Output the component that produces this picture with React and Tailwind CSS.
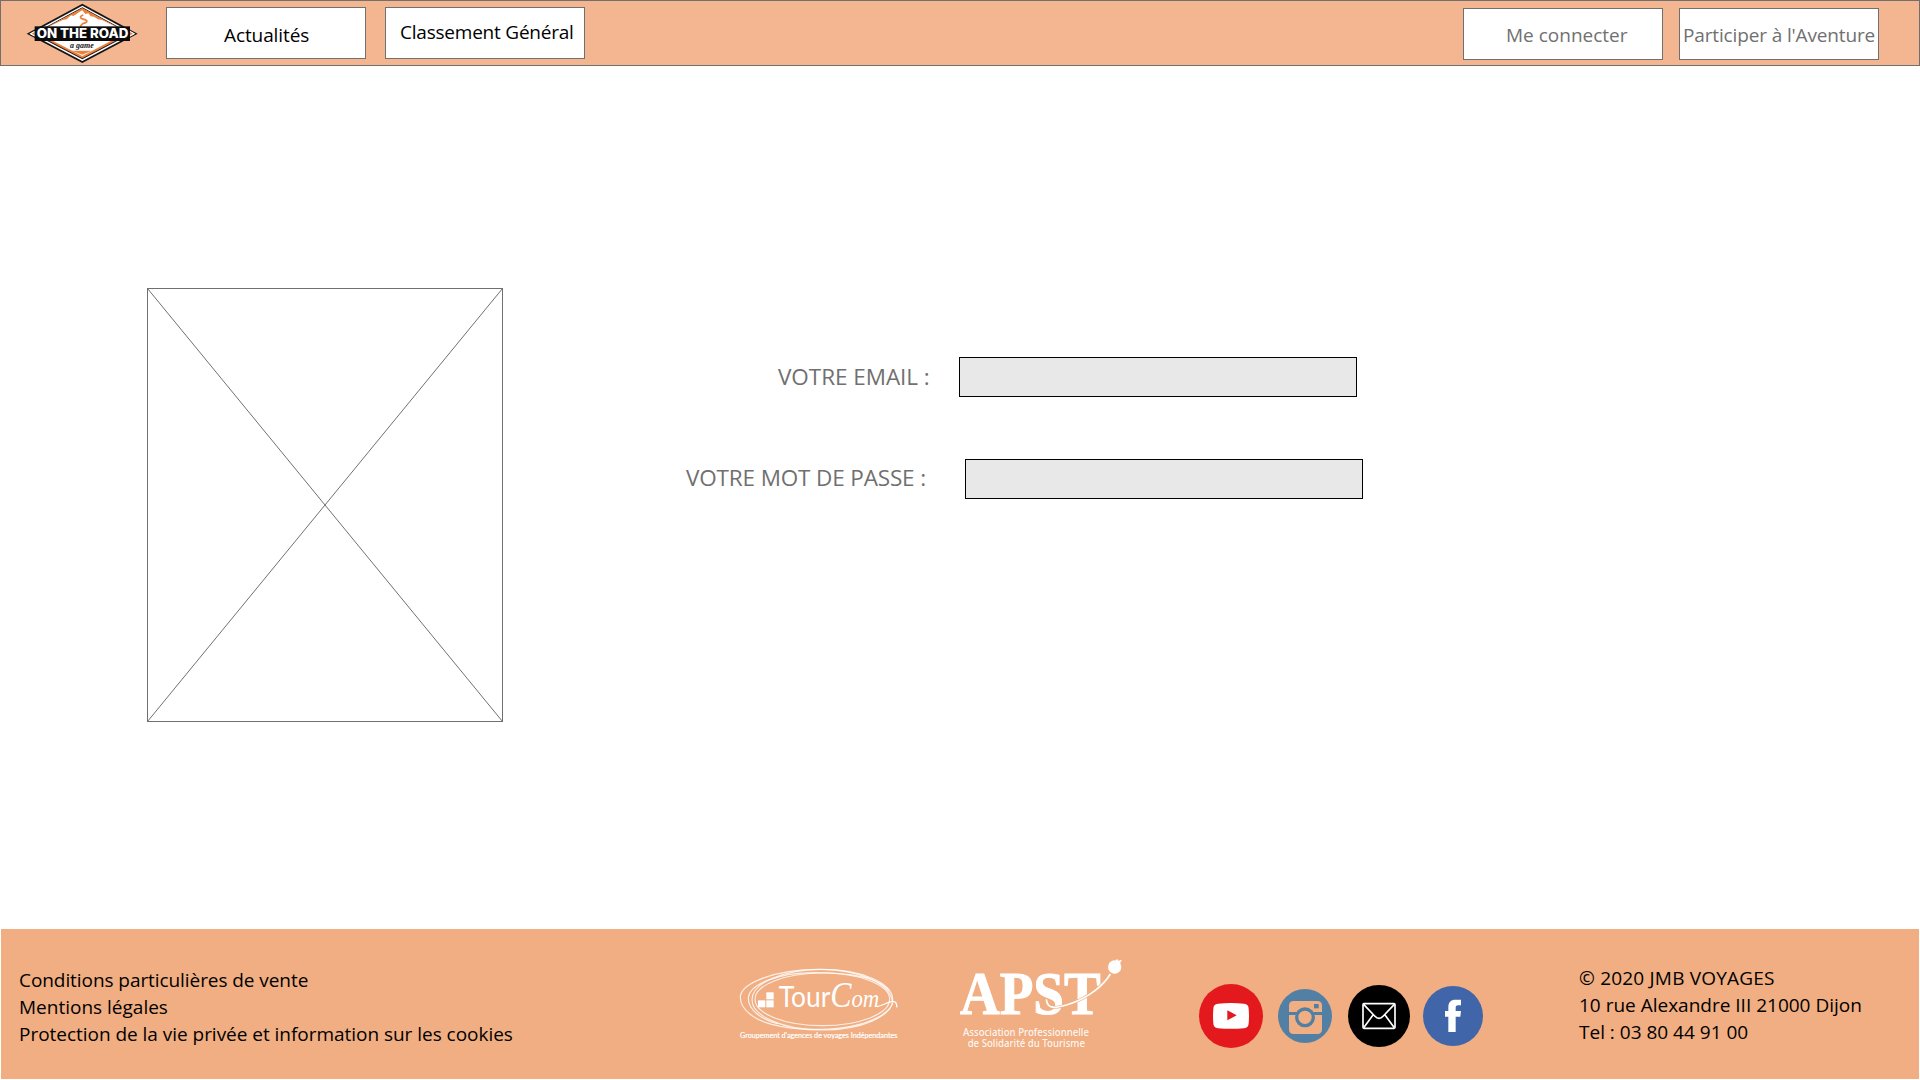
function RoadLogo() {
  return (
    <svg className="h-[60px] w-[112px] shrink-0" viewBox="18 9 336 180">
      <polygon points="187,11 353,101 187,189 20,101" fill="#151515" />
      <polygon points="187,17 342,101 187,183 31,101" fill="#ffffff" />
      <polygon points="187,22 333,101 187,178 40,101" fill="#151515" />
      <polygon points="187,25 327,101 187,175 46,101" fill="#ec7f3b" />
      <path d="M81 82 L132 55 L160 41 L166 44 L176 35 L187 30 L196 40 L204 37 L212 44 L218 42 L240 55 L292 82 Z" fill="#ffffff" />
      <path d="M187 24 L187 30 L170 41 L160 48 L153 46 L140 58 L128 60 L84 81 L70 88 Z" fill="#ec7f3b" />
      <path d="M187 24 L187 30 L196 42 L205 40 L212 49 L222 50 L234 58 L246 60 L290 81 L304 88 Z" fill="#ec7f3b" />
      <path d="M190 45 C178 50 178 54 192 58 C206 62 202 68 188 71 L180 80" fill="none" stroke="#ec7f3b" strokeWidth="5" />
      <polygon points="94,120 278,120 187,168" fill="#ffffff" />
      <polygon points="155,152 215,152 187,164" fill="#ec7f3b" />
      <path d="M28 101 L44 92 V110 Z M346 101 L330 92 V110 Z" fill="#ffffff" />
      <path d="M35 101 L44 96 V106 Z M339 101 L330 96 V106 Z" fill="#ec7f3b" />
      <rect x="44" y="79" width="286" height="44" fill="#0c0c0c" />
      <text x="50" y="115" fill="#ffffff" fontFamily="Inter, sans-serif" fontWeight="800" fontSize="38" textLength="275" lengthAdjust="spacingAndGlyphs">ON THE ROAD</text>
      <text x="150" y="144" fill="#151515" fontFamily="'Liberation Serif', serif" fontStyle="italic" fontWeight="700" fontSize="27" textLength="71" lengthAdjust="spacingAndGlyphs">a game</text>
    </svg>
  );
}

function TourComLogo() {
  return (
    <svg className="mt-[38px] ml-[225px] h-[73px] w-[160px] shrink-0" viewBox="9 21 480 219">
      <g fill="none" stroke="#ffffff" strokeOpacity="0.8" strokeWidth="3.5">
        <ellipse cx="262" cy="119" rx="211" ry="91" />
        <ellipse cx="262" cy="118" rx="202" ry="79" />
        <path d="M472 122 C462 68 370 28 250 28 C120 28 16 70 16 112 C16 150 60 180 110 193 C180 212 300 214 370 194 C430 178 466 152 474 128" />
        <path d="M462 92 C430 52 340 38 240 38 C130 38 42 72 40 115 C40 150 80 180 130 192" />
      </g>
      <g fill="#ffffff">
        <rect x="69" y="121" width="22" height="21" />
        <rect x="94" y="121" width="22" height="21" />
        <rect x="94" y="97" width="22" height="21" />
        <text x="131" y="141" fontFamily="Lato, sans-serif" fontSize="88" textLength="302" lengthAdjust="spacingAndGlyphs">
          Tour<tspan fontFamily="'Liberation Serif', serif" fontStyle="italic" fontSize="106">C</tspan><tspan fontFamily="'Liberation Serif', serif" fontStyle="italic" fontSize="76">om</tspan>
        </text>
        <text x="15" y="234" fontFamily="Lato, sans-serif" fontSize="21" fontWeight="400" stroke="#ffffff" strokeWidth="0.6" textLength="472" lengthAdjust="spacingAndGlyphs">Groupement d'agences de voyages Indépendantes</text>
      </g>
      <path d="M426 140 C442 138 456 126 472 124 C482 123 485 130 486 142" fill="none" stroke="#ffffff" strokeWidth="4" />
    </svg>
  );
}

function ApstLogo() {
  return (
    <svg className="mt-[29px] ml-[61px] h-[92px] w-[164px] shrink-0" viewBox="12 24 492 276">
      <text x="15" y="192" fill="#ffffff" stroke="#ffffff" strokeWidth="3" fontFamily="'Liberation Serif', serif" fontWeight="700" fontSize="182" textLength="422" lengthAdjust="spacingAndGlyphs">APST</text>
      <path d="M274 148 C276 182 310 174 350 160 C400 142 445 108 466 72" fill="none" stroke="#f0ae82" strokeWidth="9" />
      <path d="M274 148 C276 182 310 174 350 160 C400 142 445 108 466 72" fill="none" stroke="#ffffff" strokeWidth="5" />
      <circle cx="479" cy="51" r="20" fill="#ffffff" />
      <path d="M480 36 L486 26 L490 32 L501 29 L494 42 Z" fill="#ffffff" />
      <g fill="#ffffff" fillOpacity="0.9" fontFamily="'Noto Sans', sans-serif" fontSize="30" fontWeight="500">
        <text x="24" y="257" textLength="378" lengthAdjust="spacingAndGlyphs">Association Professionnelle</text>
        <text x="38" y="291" textLength="352" lengthAdjust="spacingAndGlyphs">de Solidarité du Tourisme</text>
      </g>
    </svg>
  );
}

function SocialLinks() {
  return (
    <div className="mt-[55px] ml-[76px] flex h-16 items-center">
      <a href="#" aria-label="YouTube">
        <svg className="h-16 w-16" viewBox="57 72 192 192">
          <circle cx="153" cy="168" r="96" fill="#e3191e" />
          <path d="M114 131 Q153 127 192 131 Q206 132 206 146 Q208 168 206 190 Q206 204 192 205 Q153 208 114 205 Q100 204 100 190 Q98 168 100 146 Q100 132 114 131 Z" fill="#ffffff" />
          <path d="M142 151 L170 166 L142 181 Z" fill="#e3191e" />
        </svg>
      </a>
      <a href="#" aria-label="Instagram" className="ml-[15px]">
        <svg className="h-[54px] w-[54px]" viewBox="294 87 162 162">
          <circle cx="375" cy="168" r="81" fill="#5280a5" />
          <rect x="327" y="123" width="99" height="99" rx="13" fill="#f0ae82" />
          <path d="M327 156 H426 V165 H327 Z" fill="#5280a5" />
          <circle cx="375" cy="172" r="30" fill="#5280a5" />
          <circle cx="375" cy="172" r="20" fill="#f0ae82" />
          <rect x="402" y="132" width="14" height="13" fill="#5280a5" />
        </svg>
      </a>
      <a href="#" aria-label="E-mail" className="ml-4">
        <svg className="h-[62px] w-[62px]" viewBox="504 75 186 186">
          <circle cx="597" cy="168" r="93" fill="#000000" />
          <g fill="none" stroke="#ffffff" strokeWidth="5" strokeLinejoin="round">
            <rect x="549" y="131" width="96" height="74" rx="3" />
            <path d="M551 133 L584 168 Q597 182 610 168 L643 133 M551 203 L579 165 M643 203 L615 165" />
          </g>
        </svg>
      </a>
      <a href="#" aria-label="Facebook" className="ml-[13px]">
        <svg className="h-[60px] w-[60px]" viewBox="729 78 180 180">
          <circle cx="819" cy="168" r="90" fill="#4065a8" />
          <path d="M805 216 V170 H795 V153 H805 V142 C805 127 812 119 827 119 H843 V136 H834 C829 136 827 139 827 143 V153 H843 L841 170 H827 V216 Z" fill="#ffffff" />
        </svg>
      </a>
    </div>
  );
}

const navButton =
  "flex h-[52px] w-[200px] shrink-0 items-start border border-[#707070] bg-white text-[19px] leading-[27px] whitespace-nowrap";
const field = "h-10 w-[398px] border border-black bg-[#e8e8e8] outline-none";
const label = "block text-[22.5px] leading-[30px] whitespace-nowrap text-[#707070]";

export default function App() {
  return (
    <div className="flex h-[1080px] w-[1920px] flex-col overflow-hidden bg-white font-['Open_Sans','Noto_Sans',sans-serif] text-black">
      <header className="flex h-[66px] items-start border border-[#707070] bg-[#f3b691] pt-[6px] pr-10 pl-[25px]">
        <div className="-mt-1">
          <RoadLogo />
        </div>
        <nav className="ml-7 flex gap-[19px]">
          <button className={`${navButton} pt-[14px] pl-[57px] tracking-[-0.1px]`}>Actualités</button>
          <button className={`${navButton} pt-[11px] pl-[14px] tracking-[-0.22px]`}>Classement Général</button>
        </nav>
        <div className="mt-px ml-auto flex gap-4">
          <button className={`${navButton} pt-[13px] pl-[42px] text-[#707070]`}>Me connecter</button>
          <button className={`${navButton} pt-[13px] pl-[3px] tracking-[-0.14px] text-[#707070]`}>Participer à l'Aventure</button>
        </div>
      </header>

      <main className="flex h-[863px] items-start pt-[222px] pl-[147px]">
        <svg className="h-[434px] w-[356px] shrink-0" viewBox="0 0 356 434" fill="none" stroke="#707070">
          <rect x="0.5" y="0.5" width="355" height="433" />
          <path d="M0.5 0.5 L355.5 433.5 M355.5 0.5 L0.5 433.5" />
        </svg>
        <form className="ml-[183px] pt-[69px]">
          <div className="flex items-start pl-[92px]">
            <label htmlFor="email" className={`${label} w-[181px] pt-[5px] tracking-[-0.05px]`}>VOTRE EMAIL :</label>
            <input id="email" type="email" className={field} />
          </div>
          <div className="mt-[62px] flex items-start">
            <label htmlFor="password" className={`${label} w-[279px] pt-1 tracking-[-0.15px]`}>VOTRE MOT DE PASSE :</label>
            <input id="password" type="password" className={field} />
          </div>
        </form>
      </main>

      <footer className="mx-px flex h-[150px] items-start bg-[#f0ae82] pl-[18px] text-[19px] leading-[27px] whitespace-nowrap">
        <ul className="w-[494px] pt-[38px]">
          <li className="tracking-[-0.07px]">Conditions particulières de vente</li>
          <li>Mentions légales</li>
          <li className="tracking-[-0.03px]">Protection de la vie privée et information sur les cookies</li>
        </ul>
        <TourComLogo />
        <ApstLogo />
        <SocialLinks />
        <address className="mt-9 ml-24 not-italic">
          <p className="tracking-[0.2px]">© 2020 JMB VOYAGES</p>
          <p>10 rue Alexandre III 21000 Dijon</p>
          <p>Tel : 03 80 44 91 00</p>
        </address>
      </footer>
    </div>
  );
}
